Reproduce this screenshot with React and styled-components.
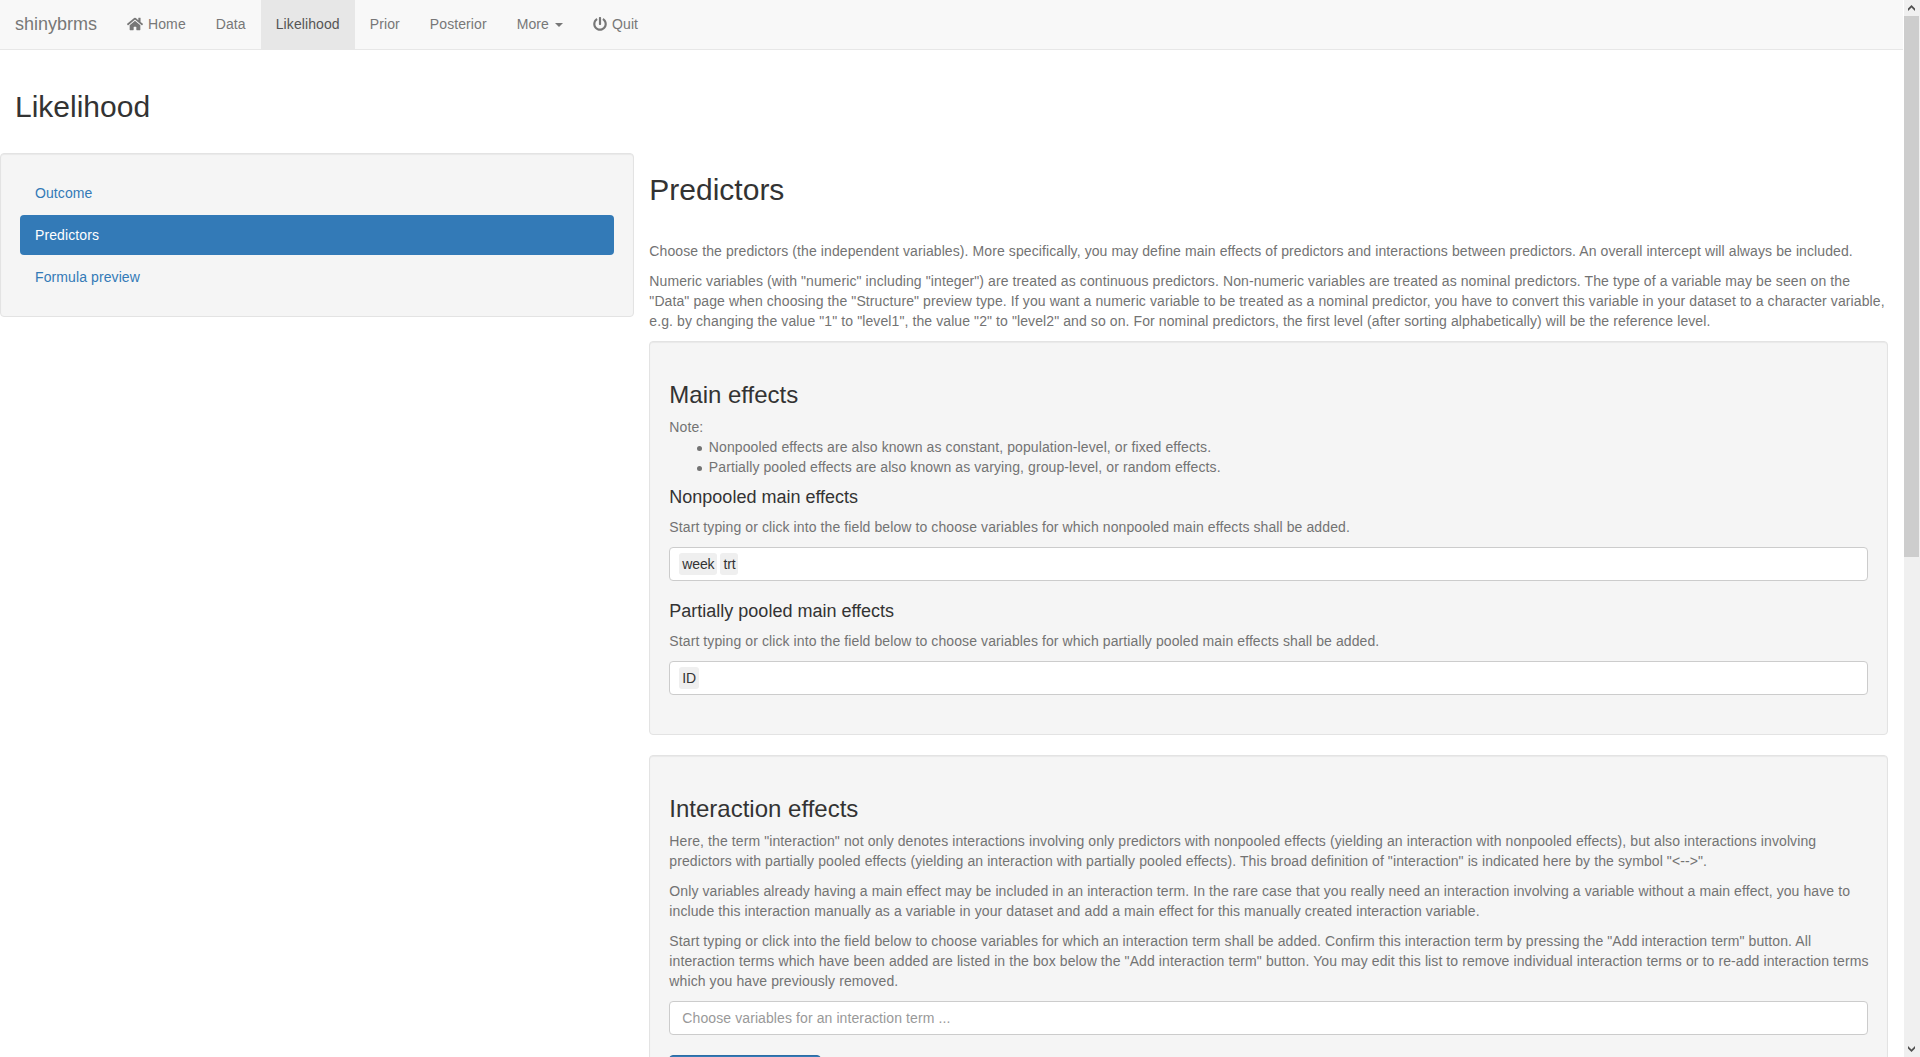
import React from 'react';
import styled, { createGlobalStyle } from 'styled-components';
import { FaHome, FaPowerOff } from 'react-icons/fa';

const GlobalStyle = createGlobalStyle`
  *, *::before, *::after { box-sizing: border-box; }
  body {
    margin: 0;
    overflow: hidden;
    background: #fff;
    color: #333;
    font: 14px/20px "Liberation Sans", Arial, sans-serif;
    letter-spacing: 0.097px;
  }
`;

const Window = styled.div`
  display: flex;
  height: 1057px;
  overflow: hidden;
`;

const Page = styled.div`
  width: 1903px;
  margin-right: 1px;
  flex: none;
`;

const Navbar = styled.nav`
  display: flex;
  height: 50px;
  background: #f8f8f8;
  border-bottom: 1px solid #e7e7e7;
`;

const Brand = styled.a`
  padding: 14px 15px;
  font-size: 18px;
  letter-spacing: 0;
  color: #777;
`;

const NavLink = styled.a`
  display: flex;
  align-items: center;
  height: 50px;
  padding: 0 15px 2px;
  white-space: pre;
  color: ${(p) => (p.$active ? '#555' : '#777')};
  background: ${(p) => (p.$active ? '#e7e7e7' : 'transparent')};

  svg {
    flex: none;
    margin-right: 5px;
  }
`;

const Caret = styled.span`
  margin: 2px 0 0 6px;
  border-top: 4px solid;
  border-left: 4px solid transparent;
  border-right: 4px solid transparent;
`;

const TitleRow = styled.header`
  padding: 40px 15px 30px;
`;

const PageTitle = styled.h2`
  margin: 0;
  font-size: 30px;
  line-height: 33px;
  font-weight: 500;
  letter-spacing: 0;
`;

const Columns = styled.div`
  display: flex;
  align-items: flex-start;
`;

const Well = styled.section`
  padding: 19px;
  background: #f5f5f5;
  border: 1px solid #e3e3e3;
  border-radius: 4px;
  box-shadow: inset 0 1px 1px rgba(0, 0, 0, 0.05);
`;

const Sidebar = styled(Well)`
  flex: 0 0 33.3333%;
  display: flex;
  flex-direction: column;
  gap: 2px;
`;

const Pill = styled.a`
  padding: 10px 15px;
  border-radius: 4px;
  color: ${(p) => (p.$active ? '#fff' : '#337ab7')};
  background: ${(p) => (p.$active ? '#337ab7' : 'transparent')};
`;

const Main = styled.main`
  flex: 1;
  min-width: 0;
  padding: 20px 15px 0;
`;

const Intro = styled.div`
  margin-top: 35px;
`;

const Help = styled.p`
  margin: 0 0 10px;
  color: #737373;
  white-space: nowrap;
`;

const Note = styled.div`
  color: #737373;
`;

const NoteList = styled.ul`
  margin: 0 0 10px;
  padding-left: 27.5px;
  list-style: none;
`;

const NoteItem = styled.li`
  display: flex;
  gap: 7px;

  &::before {
    content: '';
    flex: none;
    width: 5px;
    height: 5px;
    margin-top: 9px;
    border-radius: 50%;
    background: currentColor;
  }
`;

const Panel = styled(Well)`
  padding-top: 39px;
  height: ${(p) => p.$height};
  margin-bottom: 20px;
`;

const PanelTitle = styled.h3`
  margin: 0 0 8px;
  font-size: 24px;
  line-height: 28.4px;
  font-weight: 500;
  letter-spacing: 0;
`;

const GroupTitle = styled.h4`
  margin: 0 0 8px;
  font-size: 18px;
  line-height: 21.8px;
  font-weight: 500;
  letter-spacing: 0;
`;

const Field = styled.div`
  display: flex;
  gap: 3px;
  height: 34px;
  padding: 5px 9px;
  margin-bottom: 20px;
  background: #fff;
  border: 1px solid #ccc;
  border-radius: 4px;
`;

const Chip = styled.span`
  height: 22px;
  padding: 1px 3px;
  border-radius: 3px;
  background: #efefef;
  letter-spacing: -0.15px;
`;

const Placeholder = styled.span`
  padding: 1px 3px;
  color: #999;
`;

const Button = styled.button`
  display: block;
  width: 152px;
  height: 34px;
  border: 1px solid #2e6da4;
  border-radius: 4px;
  background: #337ab7;
`;

const Scrollbar = styled.aside`
  width: 16px;
  flex: none;
  display: flex;
  flex-direction: column;
  justify-content: space-between;
  background: #f0f0f0;
`;

const ScrollArrow = styled.svg`
  display: block;
  width: 16px;
  height: 16px;
  fill: #505050;
`;

const Thumb = styled.div`
  width: 15px;
  height: 541px;
  margin-bottom: auto;
  background: #cdcdcd;
`;

const Lines = ({ rows }) => (
  <Help>
    {rows.map((row, i) => (
      <React.Fragment key={row}>
        {i > 0 && <br />}
        {row}
      </React.Fragment>
    ))}
  </Help>
);

export default function App() {
  return (
    <>
      <GlobalStyle />
      <Window>
        <Page>
          <Navbar>
            <Brand>shinybrms</Brand>
            <NavLink><FaHome size={16} />Home</NavLink>
            <NavLink>Data</NavLink>
            <NavLink $active>Likelihood</NavLink>
            <NavLink>Prior</NavLink>
            <NavLink>Posterior</NavLink>
            <NavLink>More<Caret /></NavLink>
            <NavLink><FaPowerOff size={14} />Quit</NavLink>
          </Navbar>
          <TitleRow>
            <PageTitle>Likelihood</PageTitle>
          </TitleRow>
          <Columns>
            <Sidebar as="nav">
              <Pill>Outcome</Pill>
              <Pill $active>Predictors</Pill>
              <Pill>Formula preview</Pill>
            </Sidebar>
            <Main>
              <PageTitle>Predictors</PageTitle>
              <Intro>
                <Lines rows={['Choose the predictors (the independent variables). More specifically, you may define main effects of predictors and interactions between predictors. An overall intercept will always be included.']} />
                <Lines
                  rows={[
                    'Numeric variables (with "numeric" including "integer") are treated as continuous predictors. Non-numeric variables are treated as nominal predictors. The type of a variable may be seen on the',
                    '"Data" page when choosing the "Structure" preview type. If you want a numeric variable to be treated as a nominal predictor, you have to convert this variable in your dataset to a character variable,',
                    'e.g. by changing the value "1" to "level1", the value "2" to "level2" and so on. For nominal predictors, the first level (after sorting alphabetically) will be the reference level.',
                  ]}
                />
              </Intro>
              <Panel $height="394px">
                <PanelTitle>Main effects</PanelTitle>
                <Note>
                  Note:
                  <NoteList>
                    <NoteItem>Nonpooled effects are also known as constant, population-level, or fixed effects.</NoteItem>
                    <NoteItem>Partially pooled effects are also known as varying, group-level, or random effects.</NoteItem>
                  </NoteList>
                </Note>
                <GroupTitle>Nonpooled main effects</GroupTitle>
                <Lines rows={['Start typing or click into the field below to choose variables for which nonpooled main effects shall be added.']} />
                <Field>
                  <Chip>week</Chip>
                  <Chip>trt</Chip>
                </Field>
                <GroupTitle>Partially pooled main effects</GroupTitle>
                <Lines rows={['Start typing or click into the field below to choose variables for which partially pooled main effects shall be added.']} />
                <Field>
                  <Chip>ID</Chip>
                </Field>
              </Panel>
              <Panel $height="auto">
                <PanelTitle>Interaction effects</PanelTitle>
                <Lines
                  rows={[
                    'Here, the term "interaction" not only denotes interactions involving only predictors with nonpooled effects (yielding an interaction with nonpooled effects), but also interactions involving',
                    'predictors with partially pooled effects (yielding an interaction with partially pooled effects). This broad definition of "interaction" is indicated here by the symbol "<-->".',
                  ]}
                />
                <Lines
                  rows={[
                    'Only variables already having a main effect may be included in an interaction term. In the rare case that you really need an interaction involving a variable without a main effect, you have to',
                    'include this interaction manually as a variable in your dataset and add a main effect for this manually created interaction variable.',
                  ]}
                />
                <Lines
                  rows={[
                    'Start typing or click into the field below to choose variables for which an interaction term shall be added. Confirm this interaction term by pressing the "Add interaction term" button. All',
                    'interaction terms which have been added are listed in the box below the "Add interaction term" button. You may edit this list to remove individual interaction terms or to re-add interaction terms',
                    'which you have previously removed.',
                  ]}
                />
                <Field>
                  <Placeholder>Choose variables for an interaction term ...</Placeholder>
                </Field>
                <Button aria-label="Add interaction term" />
              </Panel>
            </Main>
          </Columns>
        </Page>
        <Scrollbar>
          <ScrollArrow viewBox="0 0 16 16">
            <path d="M7.5 5 11 8.5V11L7.5 7.6 4 11V8.5z" />
          </ScrollArrow>
          <Thumb />
          <ScrollArrow viewBox="0 0 16 16">
            <path d="M7.5 11 11 7.5V5L7.5 8.4 4 5V7.5z" />
          </ScrollArrow>
        </Scrollbar>
      </Window>
    </>
  );
}
